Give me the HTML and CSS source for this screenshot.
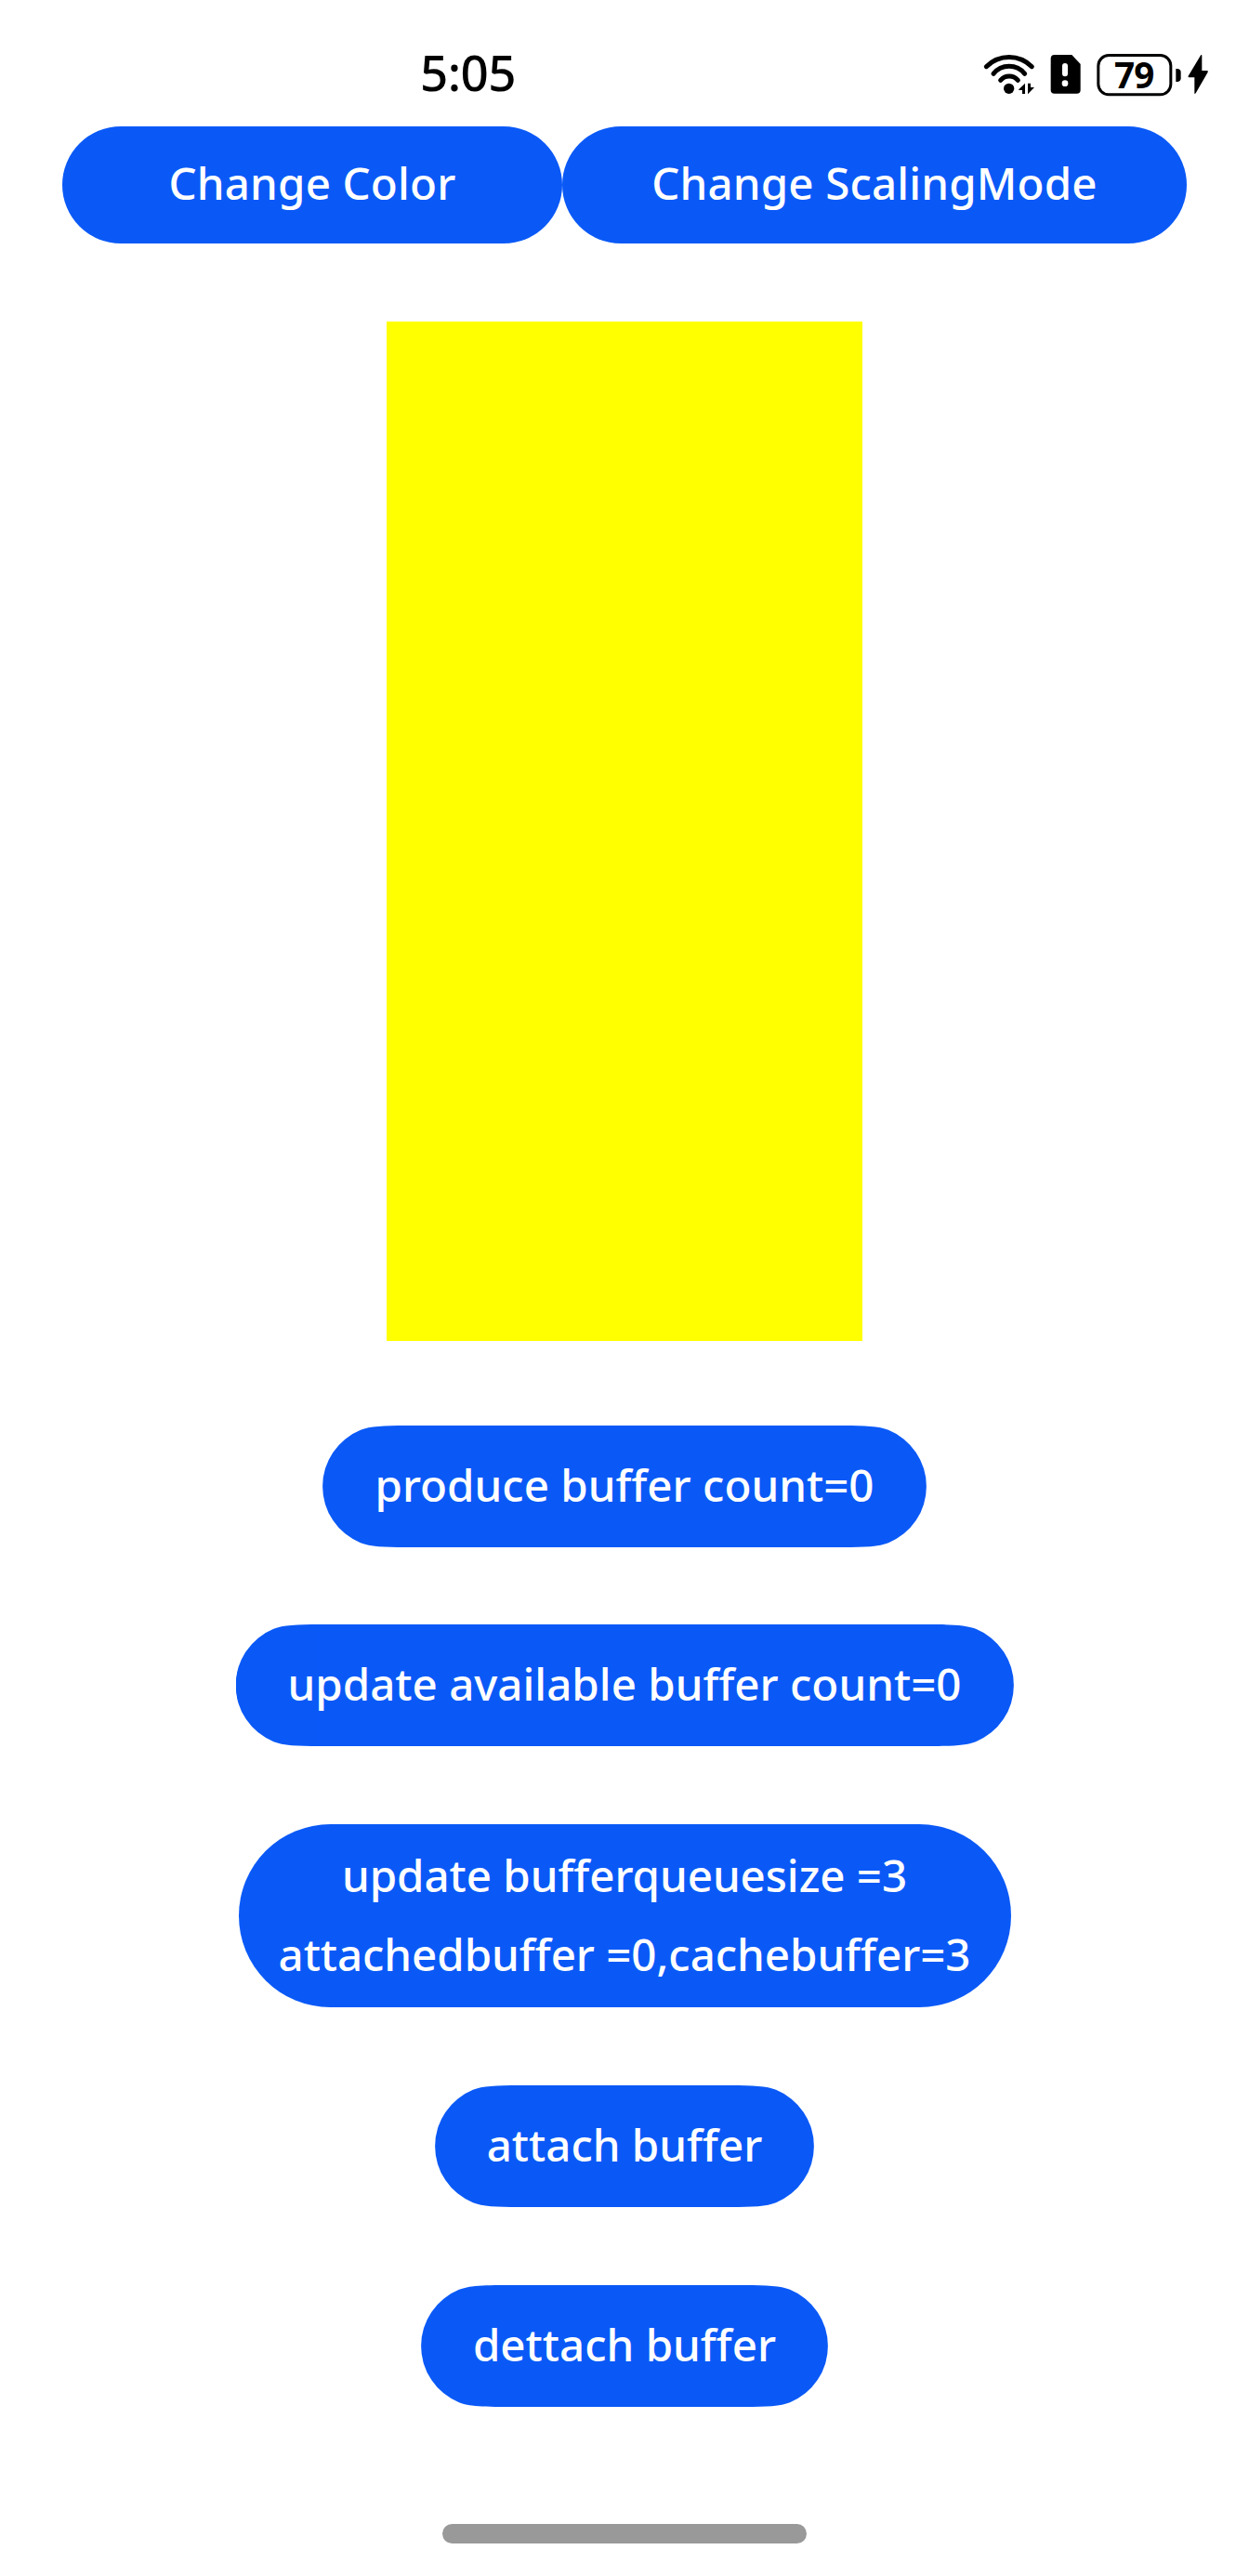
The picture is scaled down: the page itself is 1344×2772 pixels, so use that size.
FILE: index.html
```
<!DOCTYPE html>
<html lang="en">
<head>
<meta charset="utf-8">
<title>Buffer demo</title>
<link rel="stylesheet" href="styles.css">
</head>
<body>
<div class="screen">
  <header class="status-bar">
    <span class="clock">5:05</span>
    <svg class="status-icons" viewBox="48 48 735 144" width="245" height="48" aria-hidden="true">
      <!-- Wi-Fi with traffic arrows -->
      <g fill="none" stroke="#000" stroke-width="15" stroke-linecap="round">
        <path d="M64 95A103 103 0 0 1 211 95"/>
        <path d="M87 118A65 65 0 0 1 188 118"/>
        <path d="M110 139A37 37 0 0 1 166 139"/>
      </g>
      <circle cx="137" cy="166" r="17"/>
      <path d="M167 170L189 149V183H180V171ZM198 149H207V162H219L198 184Z"/>
      <!-- SIM alert -->
      <path d="M284 57H340L368 87V170Q368 182 356 182H284Q272 182 272 170V69Q272 57 284 57Z"/>
      <rect x="309" y="84" width="18" height="43" rx="9" fill="#fff"/>
      <circle cx="318" cy="149" r="10" fill="#fff"/>
      <!-- Battery -->
      <rect x="425.500" y="58.500" width="234" height="127" rx="34" fill="none" stroke="#000" stroke-width="9"/>
      <text class="battery-level" x="541" y="165" text-anchor="middle">79</text>
      <path d="M676 102H682Q692 104 692 113V133Q692 142 682 144H676Z"/>
      <path d="M757 57Q760 56 760 60V108H777Q781 109 779 113L740 181Q736 186 736 180V130H718Q714 129 716 125Z"/>
    </svg>
  </header>

  <div class="toolbar">
    <button class="btn btn-color">Change Color</button>
    <button class="btn btn-mode">Change ScalingMode</button>
  </div>

  <div class="surface"></div>

  <div class="actions">
    <button class="btn pill pill-produce">produce buffer count=0</button>
    <button class="btn pill pill-update">update available buffer count=0</button>
    <button class="btn pill-queue">update bufferqueuesize =3<br>attachedbuffer =0,cachebuffer=3</button>
    <button class="btn pill pill-attach">attach buffer</button>
    <button class="btn pill pill-detach">dettach buffer</button>
  </div>

  <div class="home-indicator"></div>
</div>
</body>
</html>
```
FILE: styles.css
```
* { box-sizing: border-box; }

body {
  margin: 0;
  background: #fff;
  font-family: "Noto Sans", "Open Sans", sans-serif;
}

.screen {
  display: flex;
  flex-direction: column;
  align-items: center;
  width: 1344px;
  height: 2772px;
  overflow: hidden;
  background: #fff;
}

.status-bar {
  display: flex;
  flex: none;
  justify-content: space-between;
  align-items: flex-start;
  width: 100%;
  height: 136px;
  padding: 42px 43px 0 452px;
}

.clock {
  font-size: 53px;
  font-weight: 500;
  line-height: 72px;
  letter-spacing: -0.6px;
}

.status-icons {
  margin-top: 14px;
  overflow: visible;
}

.battery-level {
  font-size: 116px;
  font-weight: 700;
  letter-spacing: -2px;
}

.btn {
  flex: none;
  border: 0;
  padding: 0 0 5px;
  background: #0a59f7;
  color: #fff;
  font-family: inherit;
  font-size: 47.5px;
  font-weight: 500;
  text-align: center;
  white-space: nowrap;
}

.toolbar {
  display: flex;
  flex: none;
}

.toolbar .btn {
  height: 126px;
  border-radius: 63px;
  letter-spacing: 0.15px;
}

.btn-color { width: 538px; }
.btn-mode { width: 672px; }

.surface {
  flex: none;
  width: 512px;
  height: 1097px;
  margin: 84px 0 91px;
  background: #ff0;
}

.actions {
  display: flex;
  flex: none;
  flex-direction: column;
  align-items: center;
  gap: 84px;
}

.pill {
  position: relative;
  z-index: 0;
  height: 131px;
  background: linear-gradient(#0a59f7, #0a59f7) center / calc(100% - 178px) 100% no-repeat;
}

/* Smoothed end caps: the straight edge eases into the round end. */
.pill::before,
.pill::after {
  content: "";
  position: absolute;
  z-index: -1;
  top: 0;
  left: 0;
  width: 90px;
  height: 131px;
  background: #0a59f7;
  clip-path: path("M90 0C66 0 51 .8 41 4.800A65.500 65.500 0 0 0 41 126.200C51 130.200 66 131 90 131Z");
}

.pill::after {
  left: auto;
  right: 0;
  transform: scaleX(-1);
}

.pill-produce { width: 650px; }
.pill-update { width: 837px; margin-top: -1px; }
.pill-attach { width: 408px; }
.pill-detach { width: 438px; }

.pill-queue {
  width: 831px;
  height: 197px;
  padding-bottom: 3px;
  border-radius: 98.5px;
  line-height: 85px;
  letter-spacing: -0.05px;
}

.home-indicator {
  flex: none;
  width: 392px;
  height: 21px;
  margin-top: 126px;
  border-radius: 10.5px;
  background: #999;
}
```
